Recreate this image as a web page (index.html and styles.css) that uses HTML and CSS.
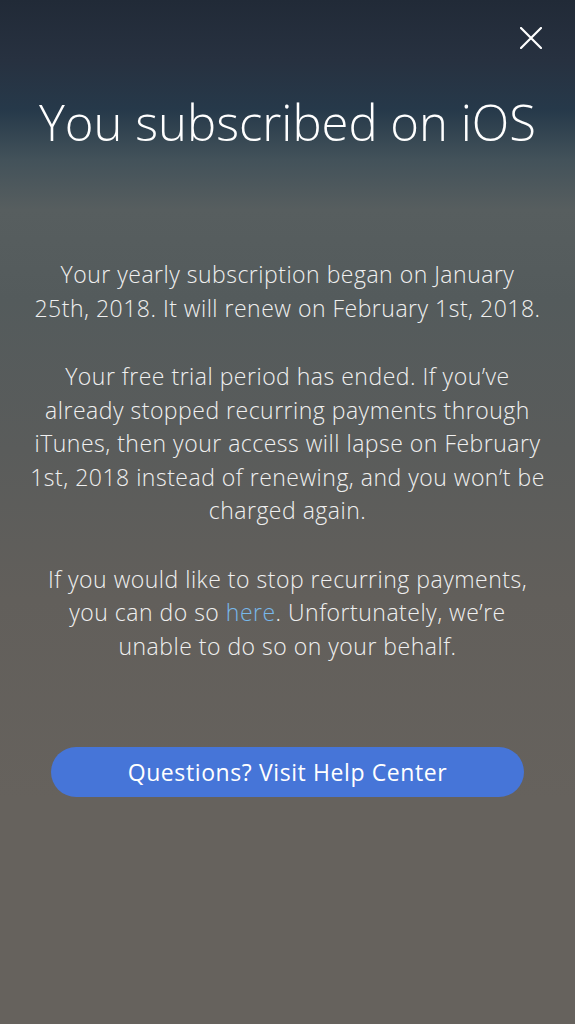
FILE: index.html
```html
<!DOCTYPE html>
<html>

<head>
  <meta charset="utf-8" />
  <title>Subscription</title>
  <link rel="stylesheet" href="styles.css">
</head>

<body>
  <div class="screen">
    <div class="topbar">
      <button class="close" aria-label="Close">
        <svg width="22" height="22" viewBox="0 0 22 22">
          <path d="M1 1 L21 21 M21 1 L1 21" stroke="#fff" stroke-width="2.2" stroke-linecap="round" fill="none" />
        </svg>
      </button>
    </div>

    <h1>You subscribed on iOS</h1>

    <div class="info">
      <p>Your yearly subscription began on January<br>25th, 2018. It will renew on February 1st, 2018.</p>
      <p>Your free trial period has ended. If you’ve<br>already stopped recurring payments through<br>iTunes, then your access will lapse on February<br>1st, 2018 instead of renewing, and you won’t be<br>charged again.</p>
      <p>If you would like to stop recurring payments,<br>you can do so <a href="#">here</a>. Unfortunately, we’re<br>unable to do so on your behalf.</p>
    </div>

    <a class="help" href="#">Questions? Visit Help Center</a>
  </div>
</body>

</html>
```

FILE: styles.css
```css
* {
  box-sizing: border-box;
}

body {
  margin: 0;
  font-family: "Open Sans", "Noto Sans", sans-serif;
  color: #fff;
}

.screen {
  min-height: 1024px;
  display: flex;
  flex-direction: column;
  align-items: center;
  padding: 0 16px;
  background: linear-gradient(to bottom,
      #212a37 0px,
      #273140 60px,
      #26394a 110px,
      #43525a 160px,
      #575e5f 210px,
      #545b5c 300px,
      #5a5c5b 450px,
      #625f5b 600px,
      #66625d 800px,
      #66625d 1024px);
}

.topbar {
  align-self: stretch;
  display: flex;
  justify-content: flex-end;
  padding-top: 27px;
  padding-right: 17px;
}

.close {
  background: none;
  border: 0;
  padding: 0;
  width: 22px;
  height: 22px;
  cursor: pointer;
}

.close svg {
  display: block;
}

h1 {
  margin: 45px 0 0;
  font-weight: 300;
  font-size: 49px;
  line-height: 56px;
  text-align: center;
  white-space: nowrap;
}

.info {
  margin-top: 108px;
  text-align: center;
  white-space: nowrap;
}

.info p {
  margin: 0;
  font-weight: 300;
  font-size: 23px;
  line-height: 33.5px;
  letter-spacing: 0.5px;
  color: #f0f0f0;
}

.info p + p {
  margin-top: 35px;
}

.info a {
  color: #78b8ea;
  text-decoration: none;
}

.help {
  margin-top: 84px;
  width: 473px;
  height: 50px;
  border-radius: 25px;
  background: #4675d8;
  color: #fff;
  text-decoration: none;
  font-size: 23px;
  letter-spacing: 0.6px;
  display: flex;
  align-items: center;
  justify-content: center;
}
```
